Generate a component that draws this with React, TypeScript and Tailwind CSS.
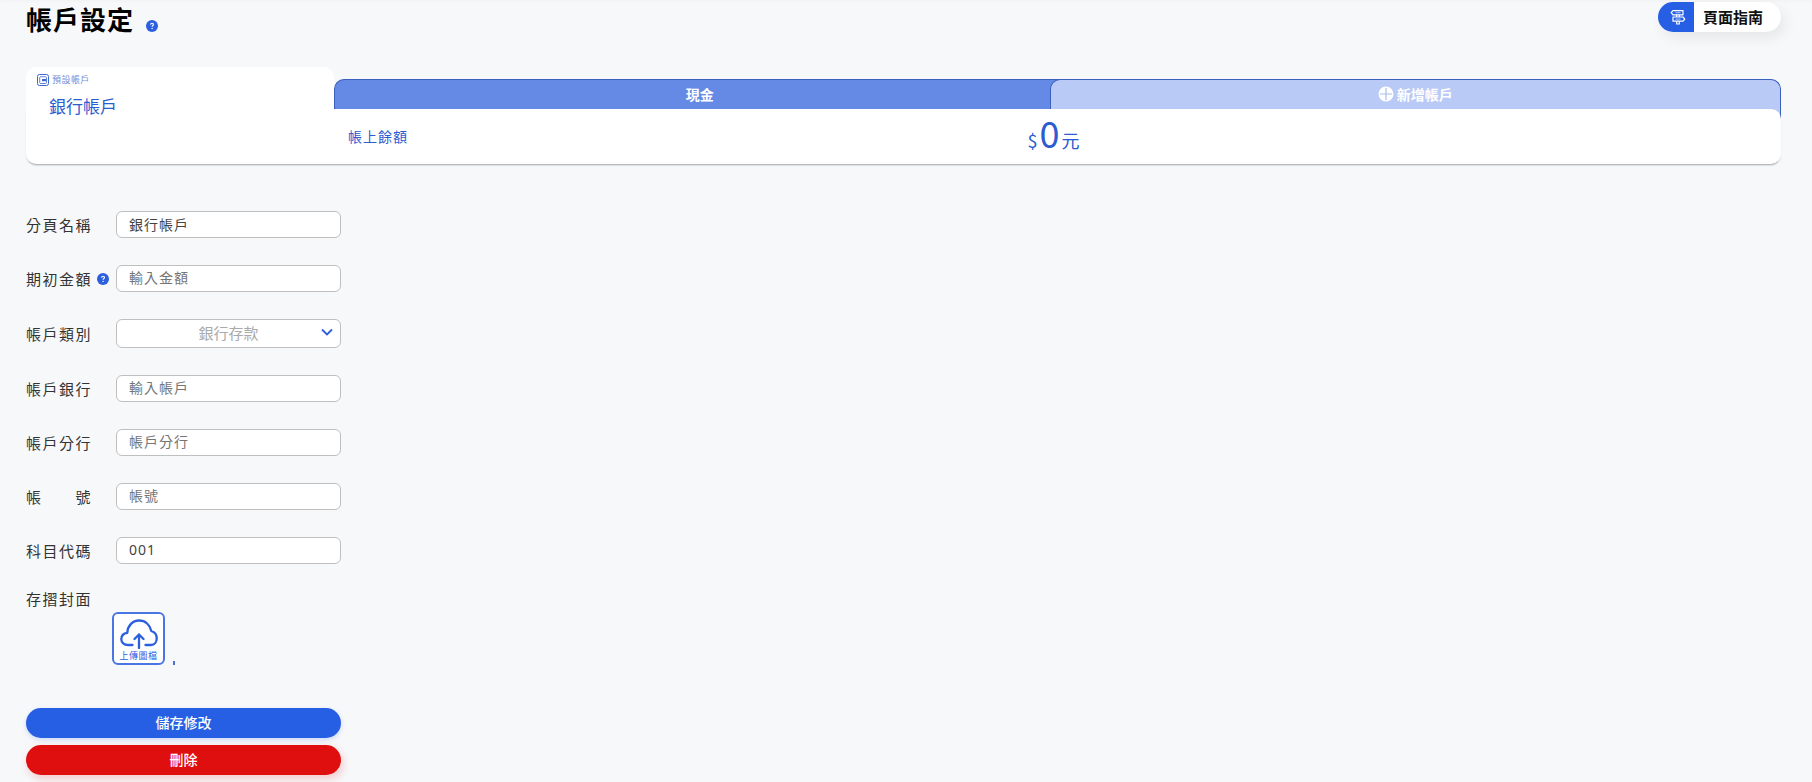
import { useState } from "react";

interface FieldProps {
  id: string;
  label: string;
  placeholder?: string;
  defaultValue?: string;
  help?: boolean;
  spread?: boolean;
}

const FIELDS: FieldProps[] = [
  { id: "tab-name", label: "分頁名稱", defaultValue: "銀行帳戶" },
  { id: "opening-amount", label: "期初金額", placeholder: "輸入金額", help: true },
];

const BANK_FIELDS: FieldProps[] = [
  { id: "bank", label: "帳戶銀行", placeholder: "輸入帳戶" },
  { id: "branch", label: "帳戶分行", placeholder: "帳戶分行" },
  { id: "account-no", label: "帳號", placeholder: "帳號", spread: true },
  { id: "subject-code", label: "科目代碼", defaultValue: "001" },
];

function HelpIcon() {
  return (
    <svg viewBox="0 0 12 12" className="h-3 w-3 shrink-0" aria-hidden="true">
      <circle cx="6" cy="6" r="6" fill="#2b5fdf" />
      <path
        d="M4.6 4.7C4.6 3.8 5.2 3.3 6 3.3S7.5 3.8 7.5 4.6C7.5 5.5 6.1 5.6 6.1 6.8"
        fill="none"
        stroke="#fff"
        strokeWidth="1.1"
      />
      <circle cx="6.1" cy="8.4" r="0.7" fill="#fff" />
    </svg>
  );
}

function SignpostIcon() {
  return (
    <svg
      viewBox="0 0 16 16"
      className="h-4 w-4"
      fill="none"
      stroke="currentColor"
      strokeWidth="1.2"
      strokeLinejoin="round"
      aria-hidden="true"
    >
      <path d="M3 1.6h10v4.2H3L1.2 3.7z" />
      <path d="M3 8h10l1.8 2.1-1.8 2.1H3z" />
      <path d="M6.7 5.8v2.2M9.3 5.8v2.2M6.7 12.2v2.8h2.6v-2.8" />
      <path d="M5.500 3.700h5M5.500 10.100h5" strokeWidth="0.7" />
    </svg>
  );
}

function DefaultAccountIcon() {
  return (
    <svg viewBox="0 0 12 12" className="h-3 w-3" fill="none" stroke="#3d65cf" aria-hidden="true">
      <rect x="0.5" y="0.5" width="11" height="11" rx="2" />
      <rect x="2.7" y="2.7" width="6.8" height="6.8" rx="1" strokeWidth="0.8" />
      <path d="M5 5h4v2.2H5z" fill="#3d65cf" stroke="none" />
    </svg>
  );
}

function UploadIcon() {
  return (
    <svg
      viewBox="0 0 38 30"
      className="h-[30px] w-[38px] shrink-0"
      fill="none"
      stroke="currentColor"
      strokeWidth="2.3"
      strokeLinecap="round"
      strokeLinejoin="round"
      aria-hidden="true"
    >
      <path d="M12.5 26H8C4 26 1.3 23.5 1.3 20C1.3 16.5 4 14.3 7.3 13.8C7.5 7 12.5 1.5 19 1.5S30 6 31.3 12C34.8 13 36.7 16 36.7 19.5C36.7 23 34.5 26 31 26H25.5" />
      <path d="M19 29V15.5M14.5 20L19 15.5L23.5 20" />
    </svg>
  );
}

function Field({ id, label, placeholder, defaultValue, help, spread }: FieldProps) {
  return (
    <div className="flex items-center">
      <div className="flex w-[90px] items-center">
        <label
          htmlFor={id}
          className={
            spread
              ? "flex w-[66px] justify-between text-[15px] leading-5 tracking-widest"
              : "w-[71px] text-[15px] leading-5 tracking-widest"
          }
        >
          {spread ? label.split("").map((char) => <span key={char}>{char}</span>) : label}
        </label>
        {help && <HelpIcon />}
      </div>
      <input
        id={id}
        type="text"
        placeholder={placeholder}
        defaultValue={defaultValue}
        className="h-[27px] min-w-0 flex-1 rounded-md border border-[#bfbfbf] bg-white px-3 pb-0.5 font-['Noto_Sans','Noto_Sans_CJK_TC',sans-serif] text-sm tracking-[1px] text-[#444] outline-none placeholder:text-[#757575]"
      />
    </div>
  );
}

export default function App() {
  const [category, setCategory] = useState("bank");

  return (
    <main className="min-h-screen bg-[#f7f8fa] px-[26px] font-['Noto_Sans_CJK_TC',sans-serif] text-[#333] shadow-[inset_0_2px_2px_rgba(0,0,0,0.02)]">
      <header className="flex items-start justify-between pr-[5px] pt-0.5">
        <div className="flex h-9 items-center gap-3">
          <h1 className="pb-0.5 text-[26px] font-bold leading-9 tracking-[1px] text-black">
            帳戶設定
          </h1>
          <button type="button" aria-label="說明" className="pt-3">
            <HelpIcon />
          </button>
        </div>
        <button
          type="button"
          className="flex h-[30px] items-center overflow-hidden rounded-full bg-white text-[15px] font-bold text-[#111] shadow-[4px_6px_14px_rgba(0,0,0,0.07)]"
        >
          <span className="flex h-full w-9 items-center justify-center bg-[#265fe3] pl-1 text-white">
            <SignpostIcon />
          </span>
          <span className="pl-[9px] pr-[18px]">頁面指南</span>
        </button>
      </header>

      {/* Account tabs and balance */}
      <section className="mr-[5px] mt-[29px] text-[#2b5cd0]">
        <div className="flex h-[42px] items-end">
          <button
            type="button"
            className="relative z-20 h-[42px] w-[308px] shrink-0 rounded-t-[10px] bg-white text-left"
          >
            <span className="absolute left-[11px] top-[7px] flex items-center gap-[3px] text-[9px] leading-3 tracking-wider text-[#6f8edb]">
              <DefaultAccountIcon />
              預設帳戶
            </span>
            <span className="absolute left-[23px] top-[27px] text-[17px] leading-6">銀行帳戶</span>
          </button>
          <button
            type="button"
            className="h-[30px] flex-1 rounded-tl-[10px] border-l border-t border-[#3960bd] bg-[#648ae5] pb-0.5 text-sm font-bold text-white"
          >
            現金
          </button>
          <button
            type="button"
            className="-mb-2.5 -ml-[15px] flex h-10 flex-1 items-center justify-center gap-[3px] rounded-t-[10px] border border-b-0 border-[#3960bd] bg-[#b9caf6] pb-3 text-sm font-bold text-white"
          >
            <svg viewBox="0 0 16 16" className="h-4 w-4" aria-hidden="true">
              <circle cx="8" cy="8" r="7.5" fill="#fff" />
              <path d="M8 2v12M2 8h12" stroke="#a9bdf0" strokeWidth="1.2" />
            </svg>
            新增帳戶
          </button>
        </div>
        <div className="relative z-10 grid h-[55px] grid-cols-3 items-center rounded-[10px] rounded-tl-none bg-white pl-[308px] shadow-[0_2px_2px_-1px_rgba(0,0,0,0.35)]">
          <span className="pb-0.5 pl-3.5 text-sm tracking-[1px]">帳上餘額</span>
          <span className="flex items-baseline justify-center gap-0.5 pb-2.5 pr-2 text-lg leading-none">
            $<span className="text-4xl leading-none">0</span>元
          </span>
        </div>
      </section>

      <form className="mt-[47px] w-[315px]" onSubmit={(e) => e.preventDefault()}>
        <div className="flex flex-col gap-[27px]">
          {FIELDS.map((field) => (
            <Field key={field.id} {...field} />
          ))}
          <div className="flex items-center">
            <label htmlFor="category" className="w-[90px] text-[15px] leading-5 tracking-widest">
              帳戶類別
            </label>
            <div className="relative flex-1">
              <select
                id="category"
                value={category}
                onChange={(e) => setCategory(e.target.value)}
                className="block h-[29px] w-full appearance-none rounded-md border border-[#bfbfbf] bg-white text-center text-[15px] text-[#aaa] outline-none"
              >
                <option value="bank">銀行存款</option>
              </select>
              <svg
                viewBox="0 0 12 8"
                className="pointer-events-none absolute right-2 top-[9px] h-2 w-3"
                fill="none"
                stroke="#2b5fdf"
                strokeWidth="1.8"
                aria-hidden="true"
              >
                <path d="M1 1.5L6 6.5L11 1.5" />
              </svg>
            </div>
          </div>
          {BANK_FIELDS.map((field) => (
            <Field key={field.id} {...field} />
          ))}
        </div>

        {/* Passbook cover upload */}
        <div className="mt-[25px]">
          <p className="text-[15px] leading-5 tracking-widest">存摺封面</p>
          <div className="ml-[86px] mt-[3px] flex items-end gap-2">
            <button
              type="button"
              className="flex h-[53px] w-[53px] flex-col items-center rounded-md border-2 border-[#4a76e3] bg-white pt-[5px] text-[#2b5fdf]"
            >
              <UploadIcon />
              <span className="pt-px text-[9px] leading-3 tracking-wider">上傳圖檔</span>
            </button>
            <span className="h-1 w-0.5 bg-[#4a70d0]" />
          </div>
        </div>

        <div className="mt-[43px] flex flex-col gap-[7px] text-sm font-medium text-white">
          <button
            type="submit"
            className="h-[30px] rounded-full bg-[#265fe3] pb-0.5 shadow-[0_2px_5px_rgba(38,95,227,0.2)]"
          >
            儲存修改
          </button>
          <button
            type="button"
            className="h-[30px] rounded-full bg-[#df0f0f] pb-0.5 shadow-[2px_4px_8px_rgba(223,15,15,0.2)]"
          >
            刪除
          </button>
        </div>
      </form>
    </main>
  );
}
